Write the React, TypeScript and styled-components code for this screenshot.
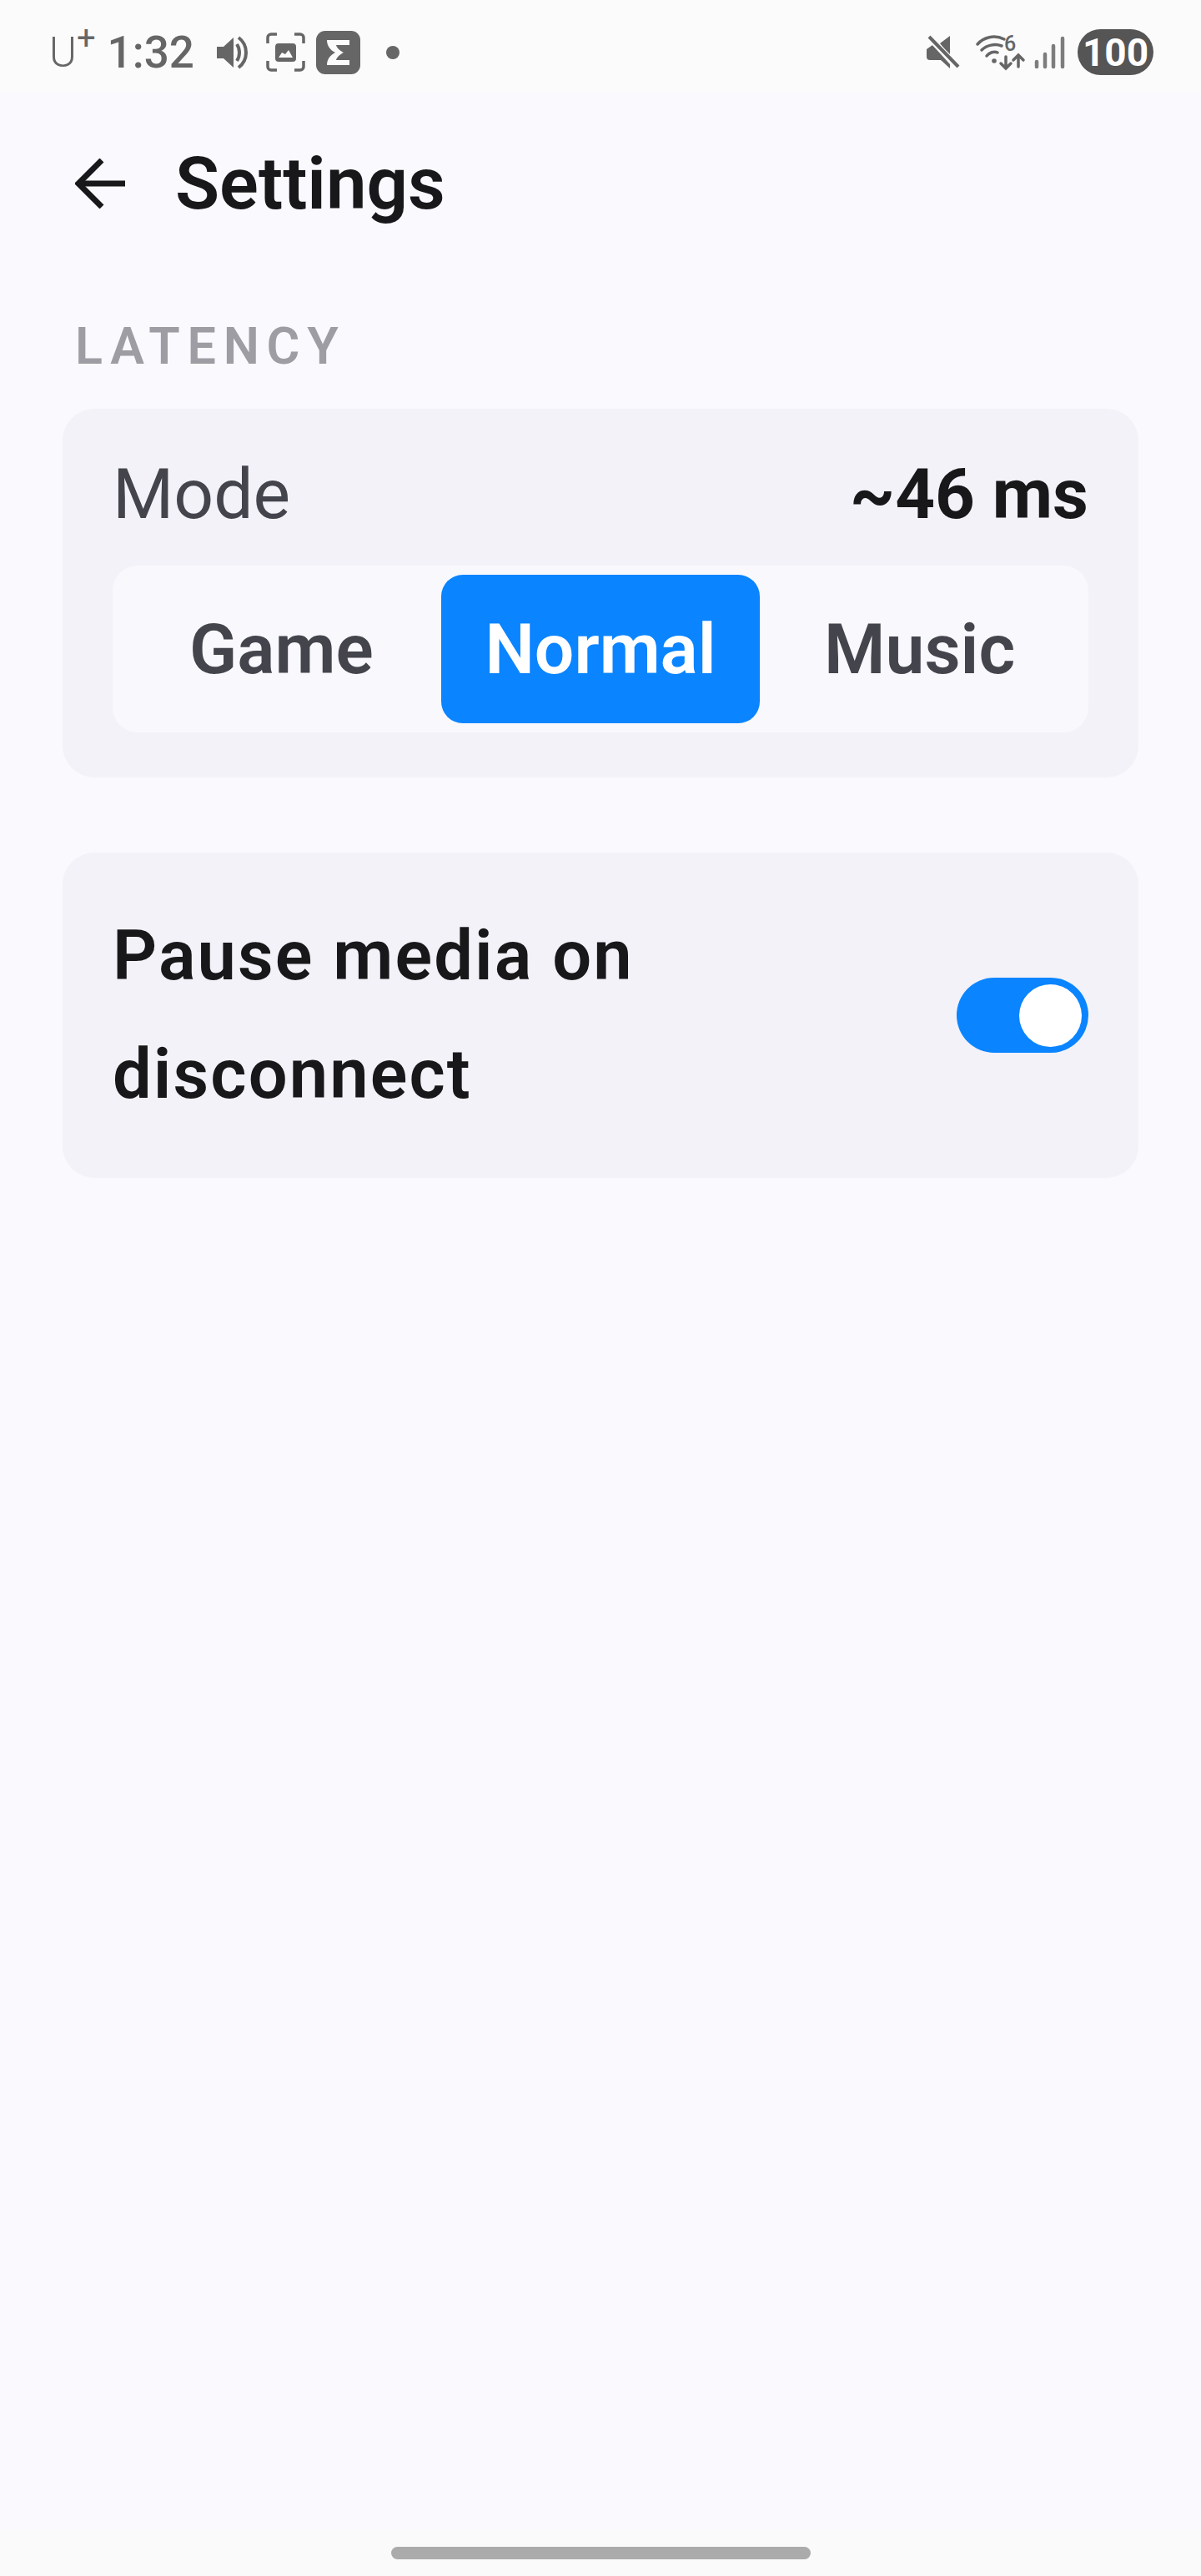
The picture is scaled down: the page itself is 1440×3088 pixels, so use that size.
import styled, { createGlobalStyle } from 'styled-components'

const GlobalStyle = createGlobalStyle`
  html, body {
    margin: 0;
    padding: 0;
    background: #f9f9fe;
    font-family: Roboto, "Liberation Sans", sans-serif;
  }
`

const Page = styled.div`
  width: 1440px;
  height: 3088px;
  display: flex;
  flex-direction: column;
  background: #f9f9fe;
`

const StatusBar = styled.div`
  height: 110px;
  box-sizing: border-box;
  padding: 15px 57px 0 59px;
  display: flex;
  align-items: center;
  justify-content: space-between;
  background: #fbfbfc;
  color: #666666;
`

const StatusGroup = styled.div`
  display: flex;
  align-items: center;
`

const Carrier = styled.span`
  font-size: 50px;
  font-weight: 300;
  line-height: 50px;
  display: flex;
  align-items: flex-start;
`

const CarrierPlus = styled.span`
  font-size: 40px;
  font-weight: 400;
  line-height: 40px;
  margin-top: -12px;
`

const Clock = styled.span`
  font-size: 53px;
  font-weight: 500;
  line-height: 50px;
  margin: 0 27px 0 14px;
`

const StatusIcon = styled.svg<{ $gap?: number }>`
  display: block;
  flex: none;
  overflow: visible;
  margin-right: ${(p) => p.$gap ?? 0}px;
`

const Battery = styled.span`
  width: 91px;
  height: 55px;
  margin-left: 15px;
  border-radius: 28px;
  background: #555555;
  color: #ffffff;
  font-size: 46px;
  font-weight: 700;
  display: flex;
  align-items: center;
  justify-content: center;
`

const Header = styled.header`
  height: 100px;
  margin-top: 60px;
  padding-left: 90px;
  display: flex;
  align-items: center;
`

const Title = styled.h1`
  margin: 0 0 0 60px;
  font-size: 87px;
  font-weight: 600;
  line-height: 100px;
  color: #18181b;
`

const Content = styled.main`
  flex: 1;
  padding: 0 75px;
`

const SectionLabel = styled.div`
  margin: 110px 0 40px 15px;
  font-size: 61px;
  font-weight: 600;
  line-height: 70px;
  letter-spacing: 8.8px;
  color: #9d9da3;
`

const Card = styled.section`
  background: #f2f2f8;
  border-radius: 38px;
`

const ModeCard = styled(Card)`
  padding: 50px 60px 54px;
`

const ModeRow = styled.div`
  height: 104px;
  margin-bottom: 34px;
  display: flex;
  align-items: center;
  justify-content: space-between;
`

const ModeLabel = styled.span`
  font-size: 84px;
  font-weight: 400;
  color: #44444c;
`

const ModeValue = styled.span`
  font-size: 83.5px;
  font-weight: 700;
  color: #18181b;
`

const Segmented = styled.div`
  height: 200px;
  box-sizing: border-box;
  padding: 11px;
  display: grid;
  grid-template-columns: repeat(3, 1fr);
  background: #f8f8fd;
  border-radius: 30px;
`

const Segment = styled.div<{ $active?: boolean }>`
  display: flex;
  align-items: center;
  justify-content: center;
  border-radius: 26px;
  font-size: 84px;
  font-weight: 600;
  color: ${(p) => (p.$active ? '#ffffff' : '#44444c')};
  background: ${(p) => (p.$active ? '#0a84ff' : 'transparent')};
`

const ToggleCard = styled(Card)`
  margin-top: 90px;
  padding: 53px 60px 53px 60px;
  display: flex;
  align-items: center;
  justify-content: space-between;
`

const ToggleLabel = styled.div`
  max-width: 800px;
  font-size: 83px;
  font-weight: 600;
  line-height: 142px;
  letter-spacing: 2.1px;
  color: #18181b;
`

const Toggle = styled.div`
  width: 158px;
  height: 90px;
  box-sizing: border-box;
  padding-right: 8px;
  display: flex;
  align-items: center;
  justify-content: flex-end;
  border-radius: 45px;
  background: #0a84ff;
`

const Knob = styled.div`
  width: 75px;
  height: 75px;
  border-radius: 50%;
  background: #ffffff;
`

const NavBar = styled.div`
  height: 55px;
  box-sizing: border-box;
  padding-top: 20px;
  display: flex;
  justify-content: center;
  background: #fafafa;
`

const NavHandle = styled.div`
  width: 503px;
  height: 15px;
  border-radius: 8px;
  background: #ababab;
`

const Dot = styled.span`
  width: 16px;
  height: 16px;
  margin-left: 31px;
  border-radius: 50%;
  background: #666666;
`

function SpeakerIcon() {
  return (
    <StatusIcon $gap={20} width="39" height="38" viewBox="0 0 39 38">
      <path d="M0 12h8L20 1v36L8 26H0z" fill="#666666" />
      <path d="M24 9c4 6 4 14 0 20" fill="none" stroke="#666666" strokeWidth="4" />
      <path d="M26 1c12 9 12 27 0 36" fill="none" stroke="#666666" strokeWidth="4" />
    </StatusIcon>
  )
}

function ScreenshotIcon() {
  return (
    <StatusIcon $gap={13} width="47" height="47" viewBox="0 0 47 47">
      <path
        d="M13 2H6a4 4 0 0 0-4 4v7M34 2h7a4 4 0 0 1 4 4v7M13 45H6a4 4 0 0 1-4-4v-7M34 45h7a4 4 0 0 0 4-4v-7"
        fill="none"
        stroke="#666666"
        strokeWidth="3.5"
      />
      <rect x="11" y="13" width="25" height="22" rx="4" fill="#666666" />
      <path d="M15 30l4-6 4 2 4-5 5 9z" fill="#fbfbfc" />
    </StatusIcon>
  )
}

function SigmaIcon() {
  return (
    <StatusIcon width="53" height="52" viewBox="0 0 53 52">
      <rect width="53" height="52" rx="11" fill="#666666" />
      <path
        d="M13 11h27v6H24c1 4 5 7 9 9-4 2-8 5-9 9h16v6H13c0-7 4-12 10-15-6-3-10-8-10-15z"
        fill="#fbfbfc"
      />
    </StatusIcon>
  )
}

function MutedIcon() {
  return (
    <StatusIcon $gap={20} width="39" height="39" viewBox="0 0 39 39">
      <path d="M0 16l7-5 21 23v5L17 29H4a4 4 0 0 1-4-4z" fill="#666666" />
      <path d="M16 9L28 0v24z" fill="#666666" />
      <path d="M3 2l35 35" stroke="#fbfbfc" strokeWidth="7" />
      <path d="M3 1l35 36" stroke="#666666" strokeWidth="4" />
    </StatusIcon>
  )
}

function WifiIcon() {
  return (
    <StatusIcon $gap={12} width="58" height="42" viewBox="0 0 58 42">
      <g fill="none" stroke="#666666" strokeWidth="3.5" strokeLinecap="round">
        <path d="M2 11C9 3 22 -1 34 5" />
        <path d="M7 18c6-6 16-8 24-5" />
        <path d="M13 25c3-4 9-6 13-4" />
        <path d="M36 26v14M30 34l6 6 6-6" />
        <path d="M51 38V24M45 30l6-6 6 6" />
      </g>
      <circle cx="22" cy="31" r="2.8" fill="#666666" />
      <text x="34" y="19" fontSize="25" fontWeight="500" fill="#666666" fontFamily="Roboto, sans-serif">
        6
      </text>
    </StatusIcon>
  )
}

function SignalIcon() {
  return (
    <StatusIcon width="37" height="38" viewBox="0 0 37 38">
      <g fill="none" stroke="#666666" strokeWidth="4.5" strokeLinecap="round">
        <path d="M3 30v6" opacity="0.85" />
        <path d="M13 21v15" opacity="0.85" />
        <path d="M23 11v25" opacity="0.85" />
        <path d="M34 2v34" opacity="0.85" />
      </g>
    </StatusIcon>
  )
}

function BackArrow() {
  return (
    <svg width="60" height="60" viewBox="0 0 60 60" style={{ display: 'block', flex: 'none' }}>
      <path d="M60 30H4" stroke="#18181b" strokeWidth="7" fill="none" />
      <path d="M32 2L4 30l28 28" stroke="#18181b" strokeWidth="7" fill="none" />
    </svg>
  )
}

export default function App() {
  return (
    <>
      <GlobalStyle />
      <Page>
        <StatusBar>
          <StatusGroup>
            <Carrier>
              U<CarrierPlus>+</CarrierPlus>
            </Carrier>
            <Clock>1:32</Clock>
            <SpeakerIcon />
            <ScreenshotIcon />
            <SigmaIcon />
            <Dot />
          </StatusGroup>
          <StatusGroup>
            <MutedIcon />
            <WifiIcon />
            <SignalIcon />
            <Battery>100</Battery>
          </StatusGroup>
        </StatusBar>

        <Header>
          <BackArrow />
          <Title>Settings</Title>
        </Header>

        <Content>
          <SectionLabel>LATENCY</SectionLabel>

          <ModeCard>
            <ModeRow>
              <ModeLabel>Mode</ModeLabel>
              <ModeValue>~46 ms</ModeValue>
            </ModeRow>
            <Segmented>
              <Segment>Game</Segment>
              <Segment $active>Normal</Segment>
              <Segment>Music</Segment>
            </Segmented>
          </ModeCard>

          <ToggleCard>
            <ToggleLabel>Pause media on disconnect</ToggleLabel>
            <Toggle>
              <Knob />
            </Toggle>
          </ToggleCard>
        </Content>

        <NavBar>
          <NavHandle />
        </NavBar>
      </Page>
    </>
  )
}
